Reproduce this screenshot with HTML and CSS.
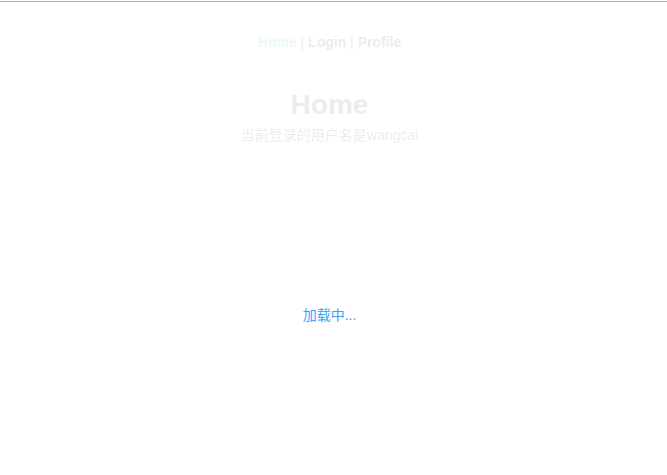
FILE: index.html
```html
<!DOCTYPE html>
<html lang="zh">
<head>
<meta charset="utf-8">
<title>Home</title>
<link rel="stylesheet" href="styles.css">
</head>
<body>
<div class="topline"></div>
<div id="app">
  <nav class="nav">
    <a class="nav-link active" href="#">Home</a> |
    <a class="nav-link" href="#">Login</a> |
    <a class="nav-link" href="#">Profile</a>
  </nav>
  <div class="home">
    <h1 class="title">Home</h1>
    <p class="user">当前登录的用户名是wangcai</p>
  </div>
</div>
<div class="loading-mask">
  <p class="loading-text">加载中...</p>
</div>
</body>
</html>
```
FILE: styles.css
```css
html, body {
  margin: 0;
  padding: 0;
  background: #ffffff;
}
.topline {
  margin-top: 1px;
  height: 1px;
  background: #b1b1b1;
  position: relative;
  z-index: 10;
}
#app {
  font-family: "Liberation Sans", Arial, "Noto Sans CJK SC", sans-serif;
  font-size: 14px;
  text-align: center;
  color: #2c3e50;
  padding-right: 8px;
}
.nav {
  padding: 32px 0 0;
  line-height: 16px;
}
.nav-link {
  color: #2c3e50;
  text-decoration: none;
  font-weight: bold;
}
.nav-link.active {
  color: #42b983;
}
.title {
  font-size: 28px;
  margin: 39px 0 0;
  line-height: 32px;
}
.user {
  margin: 6px 0 0;
  line-height: 16px;
}
.loading-mask {
  position: absolute;
  top: 0;
  left: 0;
  right: 8px;
  bottom: 0;
  background: rgba(255, 255, 255, 0.9);
  font-family: "Liberation Sans", Arial, "Noto Sans CJK SC", sans-serif;
  text-align: center;
}
.loading-mask::after {
  content: "";
  position: absolute;
  top: 0;
  bottom: 0;
  right: -8px;
  width: 8px;
  background: rgba(255, 255, 255, 0.9);
}
.loading-text {
  margin: 0;
  padding-top: 307px;
  font-size: 14px;
  line-height: 16px;
  color: #409eff;
}
```
